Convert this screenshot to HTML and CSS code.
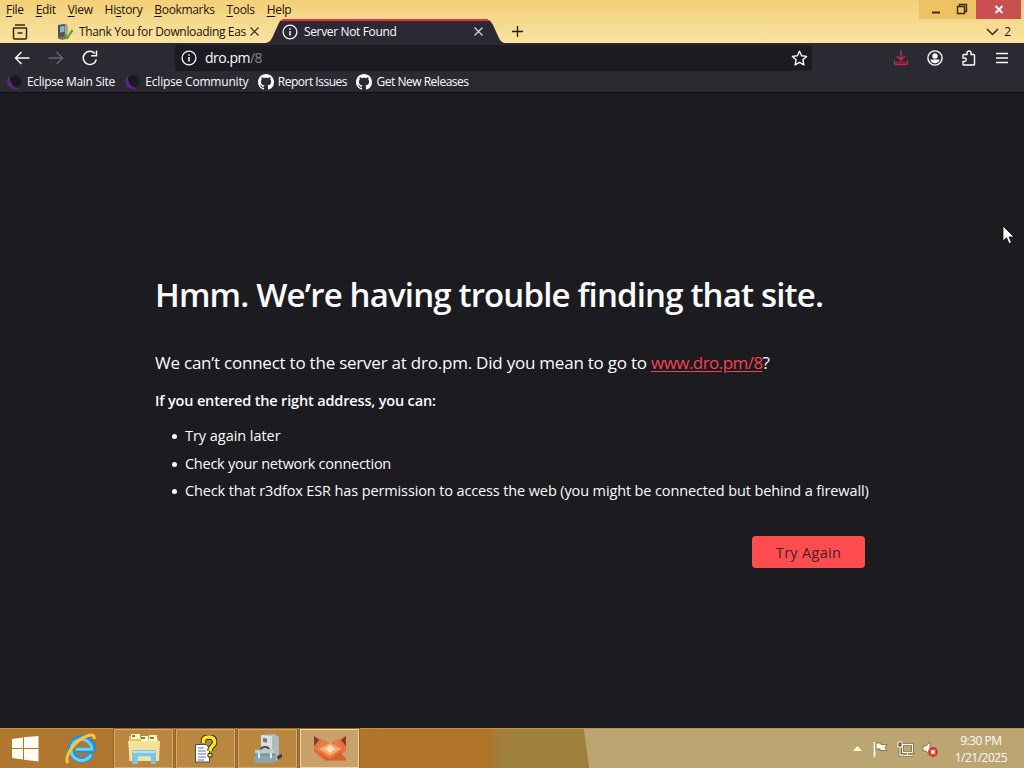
FILE: index.html
```html
<!DOCTYPE html>
<html lang="en">
<head>
    <meta charset="UTF-8">
    <meta name="viewport" content="width=device-width, initial-scale=1.0">
    <title>Server Not Found</title>
    <link rel="stylesheet" href="styles.css">
</head>
<body>
    <svg class="symbols" width="0" height="0">
        <symbol id="info" viewBox="0 0 16 16">
            <circle cx="8" cy="8" r="6.9" fill="none" stroke="currentColor" stroke-width="1.3"/>
            <path d="M8 7v4.5M8 4.2v1.5" stroke="currentColor" stroke-width="1.5"/>
        </symbol>
        <symbol id="github" viewBox="0 0 16 16">
            <path fill="currentColor" d="M8 0C3.58 0 0 3.58 0 8c0 3.54 2.29 6.53 5.47 7.59.4.07.55-.17.55-.38 0-.19-.01-.82-.01-1.49-2.01.37-2.53-.49-2.69-.94-.09-.23-.48-.94-.82-1.13-.28-.15-.68-.52-.01-.53.63-.01 1.08.58 1.23.82.72 1.21 1.87.87 2.33.66.07-.52.28-.87.51-1.07-1.78-.2-3.64-.89-3.64-3.95 0-.87.31-1.59.82-2.15-.08-.2-.36-1.02.08-2.12 0 0 .67-.21 2.2.82.64-.18 1.32-.27 2-.27s1.36.09 2 .27c1.53-1.04 2.2-.82 2.2-.82.44 1.1.16 1.92.08 2.12.51.56.82 1.27.82 2.15 0 3.07-1.87 3.75-3.65 3.95.29.25.54.73.54 1.48 0 1.07-.01 1.93-.01 2.2 0 .21.15.46.55.38A8.01 8.01 0 0 0 16 8c0-4.42-3.58-8-8-8z"/>
        </symbol>
        <symbol id="eclipse" viewBox="0 0 16 16">
            <circle cx="9" cy="7.500" r="6.500" fill="#1d1824"/>
            <path d="M4 1.600C-.5 4.500 0 14 8.500 15.200 11 15.400 12 14.800 13 14 7 13.500 3 9 4 1.600z" fill="#5d2488"/>
        </symbol>
    </svg>

    <!-- Menu bar and window buttons -->
    <div class="titlebar">
        <div class="menu">
            <span><u>F</u>ile</span>
            <span><u>E</u>dit</span>
            <span><u>V</u>iew</span>
            <span>Hi<u>s</u>tory</span>
            <span><u>B</u>ookmarks</span>
            <span><u>T</u>ools</span>
            <span><u>H</u>elp</span>
        </div>
        <div class="window-buttons">
            <div class="win-btn"><svg width="34" height="19"><path d="M13 12.500h8" stroke="#3b2a10" stroke-width="2"/></svg></div>
            <div class="win-btn"><svg width="23" height="19"><path d="M4.500 6.500h7v7h-7zM6.500 6V4.500h7v7H12" fill="none" stroke="#3b2a10" stroke-width="1.400"/></svg></div>
            <div class="win-btn win-close"><svg width="45" height="19"><path d="M19.500 6l7 7M26.500 6l-7 7" stroke="#fff" stroke-width="1.800"/></svg></div>
        </div>
    </div>

    <!-- Tabs -->
    <div class="tabs">
        <svg class="recent" width="18" height="16" viewBox="0 0 18 16" fill="none" stroke="#35280f" stroke-width="1.500">
            <path d="M4 1h10M2 4h14M2.500 4v9.500q0 1.500 1.500 1.500h10q1.500 0 1.500-1.500V4M6.500 9h5"/>
        </svg>
        <div class="tab">
            <svg width="17" height="16" viewBox="0 0 17 16">
                <path d="M1 1l6-1 3 1v12l-7 2-2-1z" fill="#4e5654"/>
                <path d="M3 2.500l4.500-.5v6L3 8.500z" fill="#86b6d1"/>
                <path d="M8 1l3 1v7l-3 3z" fill="#a9ab9c"/>
                <path d="M0 14l8-2 4 2-7 2z" fill="#77745f"/>
                <path d="M8 10l2.500 3.500L15.500 6" fill="none" stroke="#72a03a" stroke-width="2.300"/>
            </svg>
            <span class="tab-title">Thank You for Downloading Eas</span>
            <svg width="9" height="9"><path d="M.5 .5l8 8M8.500 .5l-8 8" stroke="#35280f" stroke-width="1.200"/></svg>
        </div>
        <div class="tab-active">
            <svg class="tab-shape" width="238" height="24" viewBox="0 0 238 24">
                <path d="M0 24C4 23 5 21 7 17L12 6Q14 0 19 0H219Q224 0 227 6L232 17C234 21 235 23 238 24z" fill="#2b2a33"/>
                <path d="M14.500 2Q16.500 0 19 0H219Q222 0 223.500 2z" fill="#c8404d"/>
                <path d="M14.500 2h209.500l.5 1.200H13.500z" fill="#641c2c"/>
            </svg>
            <svg width="16" height="16"><use href="#info"/></svg>
            <span class="tab-title">Server Not Found</span>
            <svg width="9" height="9"><path d="M.5 .5l8 8M8.500 .5l-8 8" stroke="#d5d4da" stroke-width="1.200"/></svg>
        </div>
        <svg class="new-tab" width="13" height="13"><path d="M6.500 1v11M1 6.500h11" stroke="#241b0a" stroke-width="1.300"/></svg>
        <div class="tab-count">
            <svg width="13" height="8"><path d="M1 1l5.500 5.500L12 1" fill="none" stroke="#35280f" stroke-width="1.500"/></svg>
            <span>2</span>
        </div>
    </div>

    <!-- Navigation -->
    <div class="navbar">
        <svg width="16" height="14" fill="none" stroke="#fbfbfe" stroke-width="1.500"><path d="M15.500 7H1.500M7.500 1l-6 6 6 6"/></svg>
        <svg width="16" height="14" fill="none" stroke="#66656e" stroke-width="1.500"><path d="M.5 7h14M8.500 1l6 6-6 6"/></svg>
        <svg width="16" height="16" fill="none" stroke="#fbfbfe" stroke-width="1.500"><path d="M14.300 9.500A6.600 6.600 0 1 1 12.800 3.500M14.500 .5v5.300H9.200"/></svg>
        <div class="urlbar">
            <svg width="16" height="16"><use href="#info"/></svg>
            <span class="url">dro.pm<span class="path">/8</span></span>
            <svg class="star" width="17" height="16" viewBox="0 0 17 16"><path d="M8.500 1.200l2.100 4.600 5 .6-3.700 3.400 1 5-4.400-2.500-4.400 2.500 1-5L1.400 6.400l5-.6z" fill="none" stroke="#fbfbfe" stroke-width="1.400" stroke-linejoin="round"/></svg>
        </div>
        <div class="tools">
            <svg width="16" height="16" fill="none" stroke="#b92e48" stroke-width="1.500"><path d="M8 .5v9M4 6l4 4 4-4M1.500 10.500v2.500q0 1.500 1.500 1.500h10q1.500 0 1.500-1.500v-2.500"/><path d="M2.500 12.500h11" stroke="#8c2039" stroke-width="2.500"/></svg>
            <svg width="16" height="16"><circle cx="8" cy="8" r="7.100" fill="none" stroke="#fbfbfe" stroke-width="1.400"/><circle cx="8" cy="6" r="2.700" fill="#fbfbfe"/><path d="M3.500 9.500h9c0 5-9 5-9 0z" fill="#fbfbfe"/></svg>
            <svg width="16" height="16" fill="none" stroke="#fbfbfe" stroke-width="1.400"><path d="M2 5.300Q2 4.500 2.800 4.500H6V3a2 2 0 0 1 4 0v1.500h2.700q.8 0 .8.800V14.200q0 .8-.8.800H2.800Q2 15 2 14.200V11.500H3.500a1.700 1.700 0 0 0 0-3.500H2z"/></svg>
            <svg width="14" height="12" stroke="#fbfbfe" stroke-width="1.500"><path d="M1 1.500h12M1 6h12M1 10.500h12"/></svg>
        </div>
    </div>

    <!-- Bookmarks toolbar -->
    <div class="bookmarks">
        <div class="bookmark"><svg width="16" height="16"><use href="#eclipse"/></svg><span>Eclipse Main Site</span></div>
        <div class="bookmark wide"><svg width="16" height="16"><use href="#eclipse"/></svg><span>Eclipse Community</span></div>
        <div class="bookmark tight"><svg width="16" height="16"><use href="#github"/></svg><span>Report Issues</span></div>
        <div class="bookmark tight"><svg width="16" height="16"><use href="#github"/></svg><span>Get New Releases</span></div>
    </div>

    <!-- Error page -->
    <main class="page">
        <h1>Hmm. We’re having trouble finding that site.</h1>
        <p class="lead">We can’t connect to the server at dro.pm. Did you mean to go to <a href="#">www.dro.pm/8</a>?</p>
        <p class="hint">If you entered the right address, you can:</p>
        <ul>
            <li class="later">Try again later</li>
            <li class="network">Check your network connection</li>
            <li class="firewall">Check that r3dfox ESR has permission to access the web (you might be connected but behind a firewall)</li>
        </ul>
        <div class="actions"><button>Try Again</button></div>
    </main>

    <!-- Taskbar -->
    <div class="taskbar">
        <div class="task start">
            <svg width="28" height="26" viewBox="0 0 28 26" fill="#fffdf2"><path d="M1 3l11-1.500v10.500H1zM13 1.300L27.500 0v12H13zM1 13h11v10.500L1 22zM13 13h14.500v12.500L13 23.700z"/></svg>
        </div>
        <div class="task ie">
            <svg width="32" height="32" viewBox="0 0 32 32">
                <path d="M26.500 21.500A11 11 0 1 1 28 17H11" fill="none" stroke="#2592c9" stroke-width="6"/>
                <path d="M26 21.500A10.500 10.500 0 1 1 27 16.300H11" fill="none" stroke="#6bd0f2" stroke-width="3"/>
                <path d="M3 30C-1 25 8 8 22 3c5-2 8-1 7 3" fill="none" stroke="#f7c53c" stroke-width="3"/>
            </svg>
        </div>
        <div class="task open">
            <svg width="32" height="30" viewBox="0 0 32 30">
                <path d="M1 2h10l2 2h17v23H1z" fill="#dec568"/>
                <path d="M3 0h9v5H3zM13 2h7v5h-7zM21 1h8v6h-8z" fill="#fff4bf"/>
                <path d="M4 2h3M13 4h4M22 4h4" stroke="#688b48" stroke-width="2"/>
                <path d="M0 7h32l-1 20H2z" fill="#f3e39c"/>
                <path d="M4 18q0-2 2-2h20q2 0 2 2v12h-5v-7H10v7H4z" fill="#83c3df"/>
                <path d="M5 18h22M10 23h12" stroke="#c5edf8" stroke-width="1.500"/>
            </svg>
        </div>
        <div class="task open">
            <svg width="22" height="28" viewBox="0 0 22 28">
                <path d="M.5 9.500H11L14.500 13v14H.5z" fill="#fff" stroke="#514b50"/>
                <path d="M3 13h6M3 16h8M3 19h8M3 22h8M3 25h6" stroke="#5870a8"/>
                <path d="M8.500 8C8 3 10 2 14 2s6 2 5.500 6c-.5 3-4.500 3-4.500 8" fill="none" stroke="#342d05" stroke-width="5.500"/>
                <path d="M8.500 8C8 3 10 2 14 2s6 2 5.500 6c-.5 3-4.500 3-4.500 8" fill="none" stroke="#f8e72b" stroke-width="3.500"/>
                <path d="M13 18.500h4v3.500h-4z" fill="#f8e72b" stroke="#342d05"/>
            </svg>
        </div>
        <div class="task open">
            <svg width="30" height="32" viewBox="0 0 30 32">
                <path d="M8 2l13-1 5 3v23l-5 1-13-3z" fill="#b3babb"/>
                <path d="M8 2l11 1v24l-11-2z" fill="#dadfdd"/>
                <path d="M10 5l4 .5v4l-4-.5z" fill="#668083"/>
                <path d="M24 23l5-2v3l-4 3z" fill="#403a35"/>
                <path d="M8 17q0-3 4-3t4 3" fill="none" stroke="#454d50" stroke-width="2"/>
                <path d="M2 17l18-1 3 3v8l-3 3H3l-2-3z" fill="#8fa5ae"/>
                <path d="M2 17l18-1 3 4H2z" fill="#bccbd0"/>
                <path d="M1 22h21" stroke="#718990"/>
                <path d="M6 20v5M18 20v5" stroke="#e6edee" stroke-width="2"/>
            </svg>
        </div>
        <div class="task open current">
            <svg width="34" height="27" viewBox="0 0 34 27">
                <path d="M1 1l11 5 5 3 5-3L33 1v15l-5 3 5 3v4H12L1 17z" fill="#e4723c"/>
                <path d="M1 1l5 4-5 6zM33 1l-5 4 5 6z" fill="#803c2c"/>
                <path d="M9 6l8 4 8-4 4 8-12 10L3 14z" fill="#e97d46"/>
                <path d="M6 14l11-6 11 6-11 7z" fill="#f4a873"/>
                <path d="M12 14l5-4 5 4-5 4z" fill="#fce0b8"/>
                <path d="M2 15l15 9 10-7 6 8H13z" fill="#d75f32"/>
            </svg>
        </div>
        <div class="tray">
            <svg width="9" height="5"><path d="M0 5l4.500-5L9 5z" fill="#fff8df"/></svg>
            <svg class="flag" width="17" height="16"><path d="M2.500 1v15" stroke="#fff" stroke-width="1.600"/><path d="M4 2h5v1.500h6l-2 3 2 3H8V8H4z" fill="#fff6df" stroke="#6a5437" stroke-width=".7"/></svg>
            <svg width="17" height="16" fill="none"><path d="M5.500 3.500h10v8h-10zM10.500 12v2M6 14.500h9M3 6v8h3" stroke="#5b4a34" stroke-width="2.500"/><path d="M5.500 3.500h10v8h-10zM10.500 12v2M6 14.500h9M3 6v8h3" stroke="#fff6df" stroke-width="1.300"/><path d="M1 1h4v5H1z" fill="#6b5a42" stroke="#fff6df"/></svg>
            <svg width="17" height="16"><path d="M1 5h3l4-4v13l-4-4H1z" fill="#fff6df" stroke="#6a5437" stroke-width=".7"/><circle cx="11" cy="11" r="4.900" fill="#d23c2b"/><path d="M9 9l4 4M13 9l-4 4" stroke="#fff" stroke-width="1.500"/></svg>
        </div>
        <div class="clock"><span>9:30 PM</span><span>1/21/2025</span></div>
    </div>

    <svg class="cursor" width="13" height="20" viewBox="0 0 13 20"><path d="M1 1v15l3.500-3.300L7 18.500l2.500-1-2.500-5.500h5z" fill="#fff" stroke="#111" stroke-width=".8"/></svg>
</body>
</html>
```
FILE: styles.css
```css
* {
    box-sizing: border-box;
}
body {
    width: 1024px;
    height: 768px;
    margin: 0;
    overflow: hidden;
    display: flex;
    flex-direction: column;
    background-color: #1c1b20;
    color: #fbfbfe;
    font-family: "Open Sans", "Noto Sans", sans-serif;
    font-size: 12px;
}
svg {
    display: block;
    flex: none;
}
.symbols {
    position: absolute;
}

/* Title bar */
.titlebar {
    height: 20px;
    flex: none;
    display: flex;
    justify-content: space-between;
    background: linear-gradient(#f3cf77, #f5d98d);
    color: #1b1408;
}
.menu {
    display: flex;
    gap: 12px;
    padding-left: 6px;
    line-height: 20px;
    letter-spacing: -0.33px;
}
.menu u {
    text-underline-offset: 2px;
}
.window-buttons {
    display: flex;
    height: 19px;
    padding-right: 3px;
}
.win-btn {
    background-color: #eec163;
}
.win-close {
    background-color: #c94f50;
}

/* Tabs */
.tabs {
    height: 23px;
    flex: none;
    display: flex;
    align-items: center;
    background: linear-gradient(#f5d98d, #f9e2a0);
    color: #1b1408;
}
.recent {
    margin-left: 11px;
}
.tab {
    display: flex;
    align-items: center;
    width: 202px;
    margin-left: 28px;
}
.tab-title {
    flex: 1;
    margin-left: 5px;
    overflow: hidden;
    white-space: nowrap;
    letter-spacing: -0.35px;
}
.tab-active {
    position: relative;
    display: flex;
    align-items: center;
    width: 238px;
    height: 23px;
    margin-left: 7px;
    padding: 0 21px 0 16px;
    color: #fbfbfe;
}
.tab-active > * {
    position: relative;
}
.tab-active .tab-shape {
    position: absolute;
    left: 0;
    top: -1px;
}
.tab-active .tab-title {
    margin-left: 6px;
}
.new-tab {
    margin-left: 7px;
}
.tab-count {
    display: flex;
    align-items: center;
    gap: 5px;
    margin-left: auto;
    padding-right: 13px;
}

/* Navigation bar */
.navbar {
    height: 29px;
    flex: none;
    display: flex;
    align-items: center;
    gap: 18px;
    padding-left: 14px;
    background-color: #2b2a33;
}
.urlbar {
    display: flex;
    align-items: center;
    width: 637px;
    height: 26px;
    margin-left: 59px;
    padding: 0 4px 0 6px;
    background-color: #1c1b22;
    border-radius: 3px;
}
.url {
    margin-left: 8px;
    font-size: 14px;
    letter-spacing: -0.5px;
}
.path {
    color: #85848c;
}
.star {
    margin-left: auto;
}
.tools {
    display: flex;
    align-items: center;
    gap: 18px;
    margin-left: auto;
    padding-right: 15px;
}

/* Bookmarks */
.bookmarks {
    height: 21px;
    flex: none;
    display: flex;
    align-items: center;
    gap: 9.4px;
    padding: 0 0 1px 6px;
    background-color: #2b2a33;
    border-bottom: 1px solid #101014;
}
.bookmark {
    display: flex;
    align-items: center;
    gap: 5px;
    letter-spacing: -0.3px;
}
.bookmark.wide {
    letter-spacing: -0.2px;
}
.bookmark.tight {
    gap: 4px;
    letter-spacing: -0.48px;
}

/* Error page */
.page {
    flex: 1;
    padding: 178px 155px 0;
    white-space: nowrap;
}
h1 {
    margin: 0;
    font-size: 33px;
    font-weight: 600;
    line-height: 48px;
    letter-spacing: -0.84px;
}
.lead {
    margin: 31px 0 0;
    font-size: 17px;
    line-height: 26px;
    letter-spacing: -0.225px;
}
.lead a {
    color: #f04451;
    letter-spacing: -0.55px;
    text-underline-offset: 2px;
}
.hint {
    margin: 14px 0 0;
    font-size: 14.5px;
    font-weight: 600;
    line-height: 22px;
    letter-spacing: -0.16px;
}
ul {
    margin: 10px 0 0;
    padding-left: 17px;
    list-style: none;
    font-size: 14.5px;
    line-height: 27.5px;
}
li {
    display: flex;
    align-items: center;
    gap: 8px;
}
li::before {
    content: "";
    width: 5px;
    height: 5px;
    margin-top: 2px;
    border-radius: 50%;
    background-color: #fbfbfe;
}
.later {
    letter-spacing: -0.04px;
}
.network {
    letter-spacing: -0.26px;
}
.firewall {
    letter-spacing: -0.125px;
}
.actions {
    display: flex;
    justify-content: flex-end;
    margin-top: 31px;
    padding-right: 4px;
}
button {
    width: 113px;
    height: 32px;
    padding: 2px 0 0;
    border: none;
    border-radius: 4px;
    background-color: #ff4c51;
    color: #3c2229;
    font-family: inherit;
    font-size: 14.5px;
    font-weight: 500;
    letter-spacing: 0.3px;
}

/* Taskbar */
.taskbar {
    height: 40px;
    flex: none;
    display: flex;
    align-items: center;
    border-top: 1px solid #bd9340;
    background: linear-gradient(82deg, transparent 583px, #bba571 584px), linear-gradient(90deg, #b17630 0, #b07428 490px, #9f803c 500px, #9f803c 100%);
}
.task {
    display: flex;
    align-items: center;
    justify-content: center;
    width: 59px;
    height: 39px;
    margin-right: 3px;
}
.start {
    width: 49px;
    margin-right: 0;
}
.ie {
    width: 62px;
    padding-left: 2px;
}
.open {
    border: 1px solid #d2aa69;
    outline: 1px solid #94652d;
    background-color: #b9873f;
}
.current {
    border-color: #efd9ac;
    background-color: #c8a16b;
}
.tray {
    display: flex;
    align-items: center;
    gap: 8px;
    margin-left: auto;
}
.flag {
    margin-left: 2px;
}
.clock {
    display: flex;
    flex-direction: column;
    align-items: center;
    margin-left: 16px;
    padding-right: 17px;
    line-height: 17px;
    letter-spacing: -0.5px;
}
.cursor {
    position: absolute;
    left: 1002px;
    top: 225px;
}
```
